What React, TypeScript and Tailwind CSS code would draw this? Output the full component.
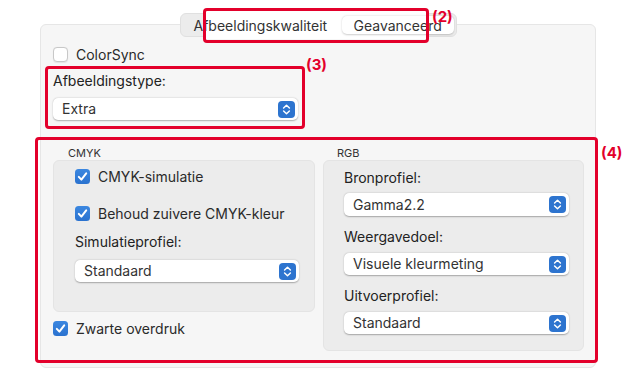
import React from "react";

const RED = "#e3002b";

function Check({ checked }: { checked: boolean }) {
  if (!checked) {
    return (
      <div className="w-[15px] h-[15px] rounded-[4px] bg-white border border-[#c8c8c8] shadow-[0_0.5px_1px_rgba(0,0,0,0.08)] shrink-0" />
    );
  }
  return (
    <svg width="15" height="15" viewBox="0 0 15 15" className="shrink-0">
      <defs>
        <linearGradient id="cbg" x1="0" y1="0" x2="0" y2="1">
          <stop offset="0" stopColor="#3b87e0" />
          <stop offset="1" stopColor="#2a72cf" />
        </linearGradient>
      </defs>
      <rect x="0" y="0" width="15" height="15" rx="3.5" fill="url(#cbg)" />
      <path d="M3.8 7.9 L6.4 10.6 L11.2 4.4" fill="none" stroke="#fff" strokeWidth="2" strokeLinecap="round" strokeLinejoin="round" />
    </svg>
  );
}

function Stepper() {
  return (
    <svg width="17" height="17" viewBox="0 0 17 17" className="shrink-0">
      <rect x="0" y="0" width="17" height="17" rx="4" fill="#2d74cf" />
      <path d="M5.6 7 L8.5 4.3 L11.4 7" fill="none" stroke="#fff" strokeWidth="1.5" strokeLinecap="round" strokeLinejoin="round" />
      <path d="M5.6 10 L8.5 12.7 L11.4 10" fill="none" stroke="#fff" strokeWidth="1.5" strokeLinecap="round" strokeLinejoin="round" />
    </svg>
  );
}

function Popup({ value, w, h = 22 }: { value: string; w: string; h?: number }) {
  return (
    <div
      className={`${w} flex items-center justify-between bg-white rounded-[5px] pl-[9px] pr-[3px] shadow-[0_0.5px_1.5px_rgba(0,0,0,0.3)] text-[14px] text-[#333]`}
      style={{ height: h }}
    >
      <span className="leading-none">{value}</span>
      <Stepper />
    </div>
  );
}

function CheckRow({ checked, label }: { checked: boolean; label: string }) {
  return (
    <div className="flex items-center gap-[8px] h-[15px]">
      <Check checked={checked} />
      <span className="text-[14px] text-[#2a2a2a] leading-none">{label}</span>
    </div>
  );
}

function Label({ text }: { text: string }) {
  return <div className="text-[14px] text-[#222] leading-[16px] h-[16px]">{text}</div>;
}

export default function App() {
  return (
    <div
      className="relative w-[632px] h-[381px] bg-white overflow-hidden"
      style={{ fontFamily: "Inter, 'Noto Sans', sans-serif" }}
    >
      <div className="pt-[13px] pl-[40px]">
        <div className="relative w-[556px]">
          {/* Tabs */}
          <div className="relative z-10 flex justify-center">
            <div className="relative flex items-center h-[24px] w-[277px] rounded-[6px] bg-[#ececec] border border-[#e0e0e0] p-[2px]">
              <div className="absolute left-[25px] top-[-3px] w-[221px] h-[28px] bg-white z-0" />
              <div className="relative z-20 h-full flex items-center pl-[11px] w-[159px] text-[14px] text-[#333] whitespace-nowrap">
                Afbeeldingskwaliteit
              </div>
              <div className="relative z-20 h-full flex-1 flex items-center pl-[12px] bg-white rounded-[5px] shadow-[0_0.5px_2px_rgba(0,0,0,0.2)] text-[14px] text-[#333] whitespace-nowrap">
                Geavanceerd
              </div>
            </div>
          </div>
          {/* Panel */}
          <div className="-mt-[13px] h-[344px] rounded-[6px] bg-[#f6f6f6] border border-[#e6e6e6] pl-[12px] pr-[11px] pt-[22px]">
            <CheckRow checked={false} label="ColorSync" />
            <div className="mt-[11px]">
              <Label text="Afbeeldingstype:" />
            </div>
            <div className="mt-[9px]">
              <Popup value="Extra" w="w-[245px]" />
            </div>
            <div className="mt-[26px] flex gap-[8px]">
              {/* CMYK column */}
              <div className="w-[262px] flex flex-col">
                <div className="pl-[15px] h-[14px] text-[11px] leading-[14px] text-[#333]">CMYK</div>
                <div className="h-[152px] rounded-[6px] bg-[#ececec] border border-[#e4e4e4] pl-[21px] pr-[15px] pt-[8px]">
                  <CheckRow checked label="CMYK-simulatie" />
                  <div className="mt-[22px]">
                    <CheckRow checked label="Behoud zuivere CMYK-kleur" />
                  </div>
                  <div className="mt-[13px]">
                    <Label text="Simulatieprofiel:" />
                  </div>
                  <div className="mt-[10px]">
                    <Popup value="Standaard" w="w-full" />
                  </div>
                </div>
                <div className="mt-[9px]">
                  <CheckRow checked label="Zwarte overdruk" />
                </div>
              </div>
              {/* RGB column */}
              <div className="w-[261px] flex flex-col">
                <div className="pl-[14px] h-[14px] text-[11px] leading-[14px] text-[#333]">RGB</div>
                <div className="h-[191px] rounded-[6px] bg-[#ececec] border border-[#e4e4e4] pl-[20px] pr-[14px] pt-[9px]">
                  <Label text="Bronprofiel:" />
                  <div className="mt-[7px]">
                    <Popup value="Gamma2.2" w="w-full" h={23} />
                  </div>
                  <div className="mt-[13px]">
                    <Label text="Weergavedoel:" />
                  </div>
                  <div className="mt-[8px]">
                    <Popup value="Visuele kleurmeting" w="w-full" />
                  </div>
                  <div className="mt-[13px]">
                    <Label text="Uitvoerprofiel:" />
                  </div>
                  <div className="mt-[8px]">
                    <Popup value="Standaard" w="w-full" />
                  </div>
                </div>
              </div>
            </div>
          </div>
        </div>
      </div>

      {/* Annotations */}
      <div className="absolute left-[203px] top-[8px] w-[226px] h-[35px] rounded-[4px] border-[3px] z-30" style={{ borderColor: RED }} />
      <div className="absolute left-[432px] top-[9px] text-[15px] font-bold leading-[16px] z-30" style={{ color: RED }}>(2)</div>
      <div className="absolute left-[45px] top-[66px] w-[260px] h-[63px] rounded-[4px] border-[3px] z-30" style={{ borderColor: RED }} />
      <div className="absolute left-[306px] top-[57px] text-[15px] font-bold leading-[16px] z-30" style={{ color: RED }}>(3)</div>
      <div className="absolute left-[35px] top-[137px] w-[563px] h-[226px] rounded-[4px] border-[3px] z-30" style={{ borderColor: RED }} />
      <div className="absolute left-[601px] top-[145px] text-[15px] font-bold leading-[16px] z-30" style={{ color: RED }}>(4)</div>
    </div>
  );
}
